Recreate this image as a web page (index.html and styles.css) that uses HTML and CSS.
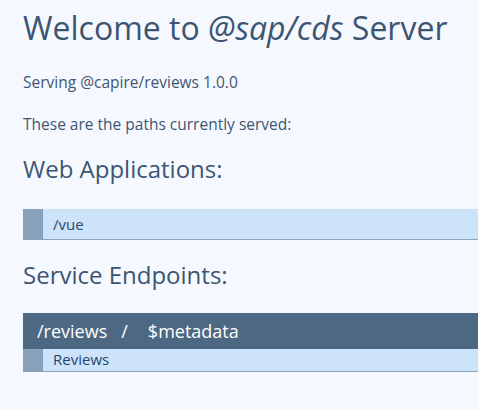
FILE: index.html
```html
<!DOCTYPE html>
<html>
<head>
<meta charset="utf-8">
<link rel="stylesheet" href="styles.css">
</head>
<body>
<main class="page">
  <h1 class="title">Welcome to <i>@sap/cds</i> Server</h1>
  <p class="info info-first">Serving @capire/reviews 1.0.0</p>
  <p class="info info-second">These are the paths currently served:</p>
  <h2 class="section">Web Applications:</h2>
  <ul class="list list-apps">
    <li class="row"><span class="mark"></span><span class="label">/vue</span></li>
  </ul>
  <h2 class="section">Service Endpoints:</h2>
  <div class="service">
    <div class="service-head"><span>/reviews</span><span class="sep">/</span><span>$metadata</span></div>
    <ul class="list">
      <li class="row row-small"><span class="mark"></span><span class="label">Reviews</span></li>
    </ul>
  </div>
</main>
</body>
</html>
```
FILE: styles.css
```css
html, body {
  margin: 0;
  padding: 0;
  background: #f5f9ff;
}
body {
  font-family: "Open Sans", Lato, sans-serif;
  color: #3e5571;
}
.page {
  padding: 8px 0 0 23px;
}
.title {
  margin: 0;
  font-weight: 400;
  font-size: 32px;
  line-height: 40px;
  color: #3d5571;
}
.title i {
  font-style: italic;
}
.info {
  margin: 0;
  font-size: 15.5px;
  line-height: 20px;
}
.info-first {
  margin-top: 24px;
}
.info-second {
  margin-top: 22px;
}
.section {
  margin: 20px 0 0;
  font-weight: 400;
  font-size: 24px;
  line-height: 30px;
  color: #3d5571;
}
.list {
  list-style: none;
  margin: 0;
  padding: 0;
}
.list-apps {
  margin-top: 25px;
}
.row {
  display: flex;
  align-items: stretch;
  height: 30px;
  background: #cce3fa;
  border-bottom: 1px solid #8aa4bd;
}
.row-small {
  height: 22px;
}
.mark {
  width: 20px;
  background: #87a1ba;
  flex: none;
}
.label {
  padding-left: 10px;
  display: flex;
  align-items: center;
  font-size: 15px;
  color: #2b4a6e;
}
.row-small .label {
  padding-bottom: 2px;
  font-weight: 500;
  color: #24466d;
}
.service {
  margin-top: 23px;
}
.service-head {
  display: flex;
  align-items: center;
  height: 36px;
  padding-left: 14px;
  background: #4d6883;
  color: #ffffff;
  font-size: 18px;
}
.sep {
  margin: 0 20px 0 14px;
}
```
